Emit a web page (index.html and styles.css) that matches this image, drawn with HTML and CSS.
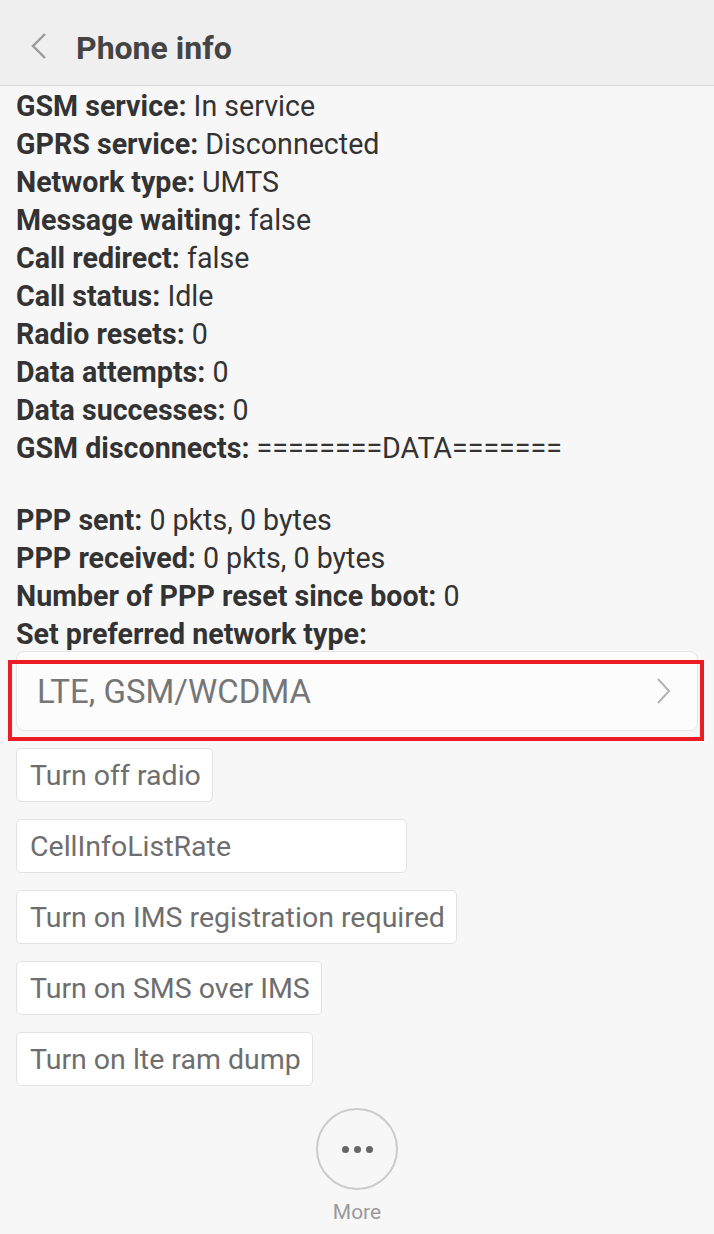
FILE: index.html
```html
<!DOCTYPE html>
<html lang="en">
<head>
    <meta charset="UTF-8">
    <meta name="viewport" content="width=device-width, initial-scale=1.0">
    <title>Phone info</title>
    <link rel="stylesheet" href="styles.css">
</head>

<body>
    <!-- Barra de topo -->
    <header class="topbar">
        <svg class="back" width="18" height="28" viewBox="0 0 18 28">
            <path d="M15 2 L3 14 L15 26" fill="none" stroke="#9a9a9a" stroke-width="2.4"/>
        </svg>
        <h1 class="title">Phone info</h1>
    </header>

    <!-- Dados -->
    <div class="info">
        <div class="row"><b>GSM service:</b> In service</div>
        <div class="row"><b>GPRS service:</b> Disconnected</div>
        <div class="row"><b>Network type:</b> UMTS</div>
        <div class="row"><b>Message waiting:</b> false</div>
        <div class="row"><b>Call redirect:</b> false</div>
        <div class="row"><b>Call status:</b> Idle</div>
        <div class="row"><b>Radio resets:</b> 0</div>
        <div class="row"><b>Data attempts:</b> 0</div>
        <div class="row"><b>Data successes:</b> 0</div>
        <div class="row"><b>GSM disconnects:</b> ========DATA=======</div>
        <div class="blank"></div>
        <div class="row"><b>PPP sent:</b> 0 pkts, 0 bytes</div>
        <div class="row"><b>PPP received:</b> 0 pkts, 0 bytes</div>
        <div class="row"><b>Number of PPP reset since boot:</b> 0</div>
        <div class="row"><b>Set preferred network type:</b></div>

        <div class="spinner">
            <span>LTE, GSM/WCDMA</span>
            <svg class="chev" width="16" height="28" viewBox="0 0 16 28">
                <path d="M2 2 L13 14 L2 26" fill="none" stroke="#b4b4b4" stroke-width="2"/>
            </svg>
            <div class="highlight"></div>
        </div>

        <div class="buttons">
            <button class="btn">Turn off radio</button>
            <button class="btn wide">CellInfoListRate</button>
            <button class="btn">Turn on IMS registration required</button>
            <button class="btn">Turn on SMS over IMS</button>
            <button class="btn">Turn on lte ram dump</button>
        </div>
    </div>

    <!-- Mais -->
    <div class="more">
        <div class="more-circle">
            <i></i><i></i><i></i>
        </div>
        <div class="more-label">More</div>
    </div>
</body>
</html>
```

FILE: styles.css
```css
/* Reset básico */
* {
    margin: 0;
    padding: 0;
    box-sizing: border-box;
}

body {
    font-family: Roboto, 'Liberation Sans', sans-serif;
    background-color: #f7f7f7;
    color: #333333;
    height: 1234px;
    overflow: hidden;
}

/* Topo */
.topbar {
    height: 86px;
    background-color: #efefef;
    border-bottom: 1px solid #d6d6d6;
    display: flex;
    align-items: center;
    padding-left: 30px;
}

.back {
    margin-right: 28px;
    margin-top: 6px;
}

.title {
    font-size: 32px;
    font-weight: bold;
    color: #444444;
    margin-top: 10px;
}

/* Linhas */
.info {
    padding: 1px 16px 0;
}

.row {
    font-size: 28.6px;
    line-height: 38px;
    white-space: nowrap;
}

.row b {
    font-weight: bold;
}

.blank {
    height: 34px;
}

/* Spinner */
.spinner {
    position: relative;
    height: 80px;
    margin-top: -2px;
    background-color: #fcfcfc;
    border: 1px solid #e6e6e6;
    border-radius: 8px;
    display: flex;
    align-items: center;
    justify-content: space-between;
    padding: 0 25px 0 20px;
    font-size: 33px;
    color: #767676;
}

.highlight {
    position: absolute;
    left: -9px;
    top: 8px;
    width: 696px;
    height: 81px;
    border: 4px solid #ec1c24;
}

/* Botões */
.buttons {
    display: flex;
    flex-direction: column;
    align-items: flex-start;
    gap: 17px;
    margin-top: 17px;
}

.btn {
    font-family: inherit;
    font-size: 28.5px;
    color: #6e6e6e;
    height: 54px;
    padding: 0 11px 0 13px;
    background-color: #ffffff;
    border: 1px solid #e2e2e2;
    border-radius: 5px;
    text-align: left;
}

.btn.wide {
    width: 391px;
}

/* Mais */
.more {
    display: flex;
    flex-direction: column;
    align-items: center;
    margin-top: 22px;
}

.more-circle {
    width: 82px;
    height: 82px;
    border: 2px solid #cccccc;
    border-radius: 50%;
    display: flex;
    align-items: center;
    justify-content: center;
    gap: 5px;
}

.more-circle i {
    width: 7px;
    height: 7px;
    border-radius: 50%;
    background-color: #666666;
}

.more-label {
    font-size: 21px;
    color: #9a9a9a;
    margin-top: 10px;
}
```
